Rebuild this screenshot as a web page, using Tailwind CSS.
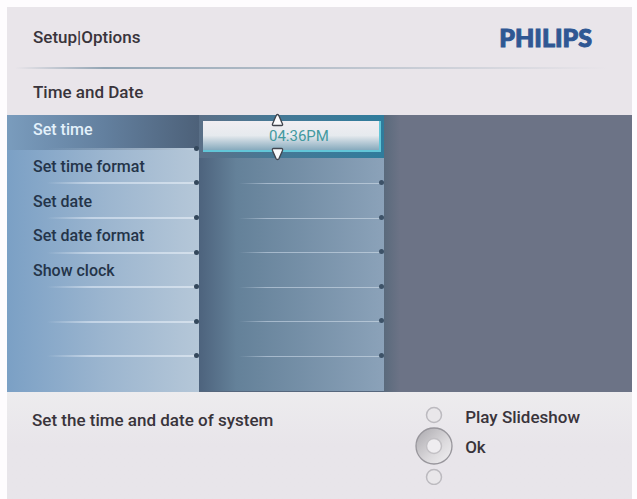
<!DOCTYPE html>
<html lang="en">
<head>
  <meta charset="UTF-8" />
  <meta name="viewport" content="width=device-width, initial-scale=1.0" />
  <title>Setup | Options</title>
  <script src="https://cdn.jsdelivr.net/npm/@tailwindcss/browser@4"></script>
</head>
<body class="bg-[#fefcfe]">
  <div class="min-h-screen flex flex-col pt-[7px] pl-[7px] pr-[5px] font-['Roboto',sans-serif] font-medium text-[17px] leading-6 text-[#39343b]">
    <div class="flex-1 flex flex-col bg-[#e9e5ea]">

      <header class="h-[60px] flex items-center justify-between pl-[26px] pr-10">
        <h1>Setup|Options</h1>
        <span class="font-['Lato',sans-serif] font-black text-[25px] leading-none text-[#2f5793] [-webkit-text-stroke:1px_#2f5793]">PHILIPS</span>
      </header>
      <div class="h-[2px] ml-2 mr-6 bg-linear-to-r from-transparent via-[#93a5b4] via-15% to-transparent"></div>
      <h2 class="h-[46px] flex items-center pl-[26px]">Time and Date</h2>

      <main class="flex-1 flex bg-[#6c7386]">
        <!-- menu -->
        <ul class="w-[192px] grid auto-rows-fr bg-linear-to-r from-[#7ba0c5] via-[#9bb5cf] via-50% to-[#b5c7d8] text-base text-[#243449]">
          <li class="relative flex bg-linear-to-r from-[#7a9cbd] via-[#63809f] via-50% to-[#4d6179]">
            <button class="flex-1 pl-[26px] pb-1 text-left text-[#e3f1fb]">Set time</button>
            <i class="absolute right-0 bottom-0 left-10 h-[2px] bg-linear-to-r from-transparent to-[#bfd0e0]"></i>
            <i class="absolute z-10 right-0 -bottom-px size-[5px] rounded-full bg-[#34485c]"></i>
          </li>
          <li class="relative flex">
            <button class="flex-1 pl-[26px] text-left">Set time format</button>
            <i class="absolute right-1 bottom-0 left-10 h-[2px] bg-linear-to-r from-transparent via-[#c3d4e6] via-30% to-[#d3dfeb]"></i>
            <i class="absolute z-10 right-0 -bottom-px size-[5px] rounded-full bg-[#34485c]"></i>
          </li>
          <li class="relative flex">
            <button class="flex-1 pl-[26px] text-left">Set date</button>
            <i class="absolute right-1 bottom-0 left-10 h-[2px] bg-linear-to-r from-transparent via-[#c3d4e6] via-30% to-[#d3dfeb]"></i>
            <i class="absolute z-10 right-0 -bottom-px size-[5px] rounded-full bg-[#34485c]"></i>
          </li>
          <li class="relative flex">
            <button class="flex-1 pl-[26px] text-left">Set date format</button>
            <i class="absolute right-1 bottom-0 left-10 h-[2px] bg-linear-to-r from-transparent via-[#c3d4e6] via-30% to-[#d3dfeb]"></i>
            <i class="absolute z-10 right-0 -bottom-px size-[5px] rounded-full bg-[#34485c]"></i>
          </li>
          <li class="relative flex">
            <button class="flex-1 pl-[26px] text-left">Show clock</button>
            <i class="absolute right-1 bottom-0 left-10 h-[2px] bg-linear-to-r from-transparent via-[#c3d4e6] via-30% to-[#d3dfeb]"></i>
            <i class="absolute z-10 right-0 -bottom-px size-[5px] rounded-full bg-[#34485c]"></i>
          </li>
          <li class="relative">
            <i class="absolute right-1 bottom-0 left-10 h-[2px] bg-linear-to-r from-transparent via-[#c3d4e6] via-30% to-[#d3dfeb]"></i>
            <i class="absolute z-10 right-0 -bottom-px size-[5px] rounded-full bg-[#34485c]"></i>
          </li>
          <li class="relative">
            <i class="absolute right-1 bottom-0 left-10 h-[2px] bg-linear-to-r from-transparent via-[#c3d4e6] via-30% to-[#d3dfeb]"></i>
            <i class="absolute z-10 right-0 -bottom-px size-[5px] rounded-full bg-[#34485c]"></i>
          </li>
          <li></li>
        </ul>

        <!-- value column -->
        <div class="relative w-[185px] grid auto-rows-fr border-b border-[#56677d] bg-linear-to-r from-[#4d637d] via-[#648199] via-20% to-[#8ba2b9]">
          <div class="absolute z-20 inset-x-0 top-0 h-[43px] flex pt-[6px] pr-[3px] pb-[6px] pl-[4px] bg-linear-to-r from-[#5a6f87] via-[#467895] via-40% to-[#2f7c9c]">
            <input type="text" aria-label="Time" value="04:36PM" class="min-w-0 flex-1 pl-[66px] border-r-2 border-b-2 border-[#62c6d8] bg-linear-to-b from-[#f1eef2] via-[#e6eaee] via-50% to-[#87aabd] text-[15px] font-normal text-[#43999f] outline-none" />
            <button aria-label="Later" class="absolute left-[72px] -top-[2px]">
              <svg class="w-[13px] h-[14px]" viewBox="0 0 13 14">
                <path d="M6.5 1.5 Q7.5 1.5 8 3 L11.5 11 Q12 12.5 10.5 12.5 H2.5 Q1 12.5 1.5 11 L5 3 Q5.5 1.5 6.5 1.5Z" fill="#fafafc" stroke="#40434c" stroke-width="1.3" />
              </svg>
            </button>
            <button aria-label="Earlier" class="absolute left-[72px] -bottom-[3px]">
              <svg class="w-[13px] h-[14px]" viewBox="0 0 13 14">
                <path d="M6.5 12.5 Q7.5 12.5 8 11.5 L11.5 3.5 Q12 1.5 10.5 1.5 H2.5 Q1 1.5 1.5 3.5 L5 11.5 Q5.5 12.5 6.5 12.5Z" fill="#fafafc" stroke="#40434c" stroke-width="1.3" />
              </svg>
            </button>
          </div>
          <div></div>
          <div class="relative"><i class="absolute right-1 bottom-0 left-10 h-px bg-linear-to-r from-transparent via-[#a5b8cb] via-20% to-[#b4c5d5]"></i><i class="absolute z-10 right-0 -bottom-px size-[5px] rounded-full bg-[#3d5267]"></i></div>
          <div class="relative"><i class="absolute right-1 bottom-0 left-10 h-px bg-linear-to-r from-transparent via-[#a5b8cb] via-20% to-[#b4c5d5]"></i><i class="absolute z-10 right-0 -bottom-px size-[5px] rounded-full bg-[#3d5267]"></i></div>
          <div class="relative"><i class="absolute right-1 bottom-0 left-10 h-px bg-linear-to-r from-transparent via-[#a5b8cb] via-20% to-[#b4c5d5]"></i><i class="absolute z-10 right-0 -bottom-px size-[5px] rounded-full bg-[#3d5267]"></i></div>
          <div class="relative"><i class="absolute right-1 bottom-0 left-10 h-px bg-linear-to-r from-transparent via-[#a5b8cb] via-20% to-[#b4c5d5]"></i><i class="absolute z-10 right-0 -bottom-px size-[5px] rounded-full bg-[#3d5267]"></i></div>
          <div class="relative"><i class="absolute right-1 bottom-0 left-10 h-px bg-linear-to-r from-transparent via-[#a5b8cb] via-20% to-[#b4c5d5]"></i><i class="absolute z-10 right-0 -bottom-px size-[5px] rounded-full bg-[#3d5267]"></i></div>
          <div class="relative"><i class="absolute right-1 bottom-0 left-10 h-px bg-linear-to-r from-transparent via-[#a5b8cb] via-20% to-[#b4c5d5]"></i><i class="absolute z-10 right-0 -bottom-px size-[5px] rounded-full bg-[#3d5267]"></i></div>
          <div></div>
        </div>
        <div class="w-4 bg-linear-to-r from-[#5a6a7c] to-[#6c7386]"></div>
      </main>

      <footer class="h-[107px] flex justify-between pl-[25px] pr-[52px] bg-linear-to-b from-[#edecee] to-[#e8e5ea] to-50%">
        <p class="pt-4">Set the time and date of system</p>
        <div class="flex gap-3 pt-[13px]">
          <svg class="w-[38px] h-20" viewBox="0 0 38 80">
            <defs>
              <linearGradient id="ring" x1="0" y1="0" x2="1" y2="1">
                <stop offset="0" stop-color="#a9a7ac" />
                <stop offset="0.6" stop-color="#dcdadd" />
                <stop offset="1" stop-color="#f2f1f3" />
              </linearGradient>
            </defs>
            <circle cx="19" cy="10" r="7.5" fill="#e9e7ea" stroke="#bcbabf" stroke-width="1.5" />
            <circle cx="19" cy="41" r="18" fill="url(#ring)" stroke="#98969c" stroke-width="1.3" />
            <circle cx="19" cy="41" r="7.5" fill="#efedf0" stroke="#c2c0c4" stroke-width="1.5" />
            <circle cx="19" cy="72" r="7.5" fill="#e9e7ea" stroke="#bcbabf" stroke-width="1.5" />
          </svg>
          <div class="flex flex-col items-start gap-[6px]">
            <button>Play Slideshow</button>
            <button>Ok</button>
          </div>
        </div>
      </footer>
    </div>
  </div>
</body>
</html>
